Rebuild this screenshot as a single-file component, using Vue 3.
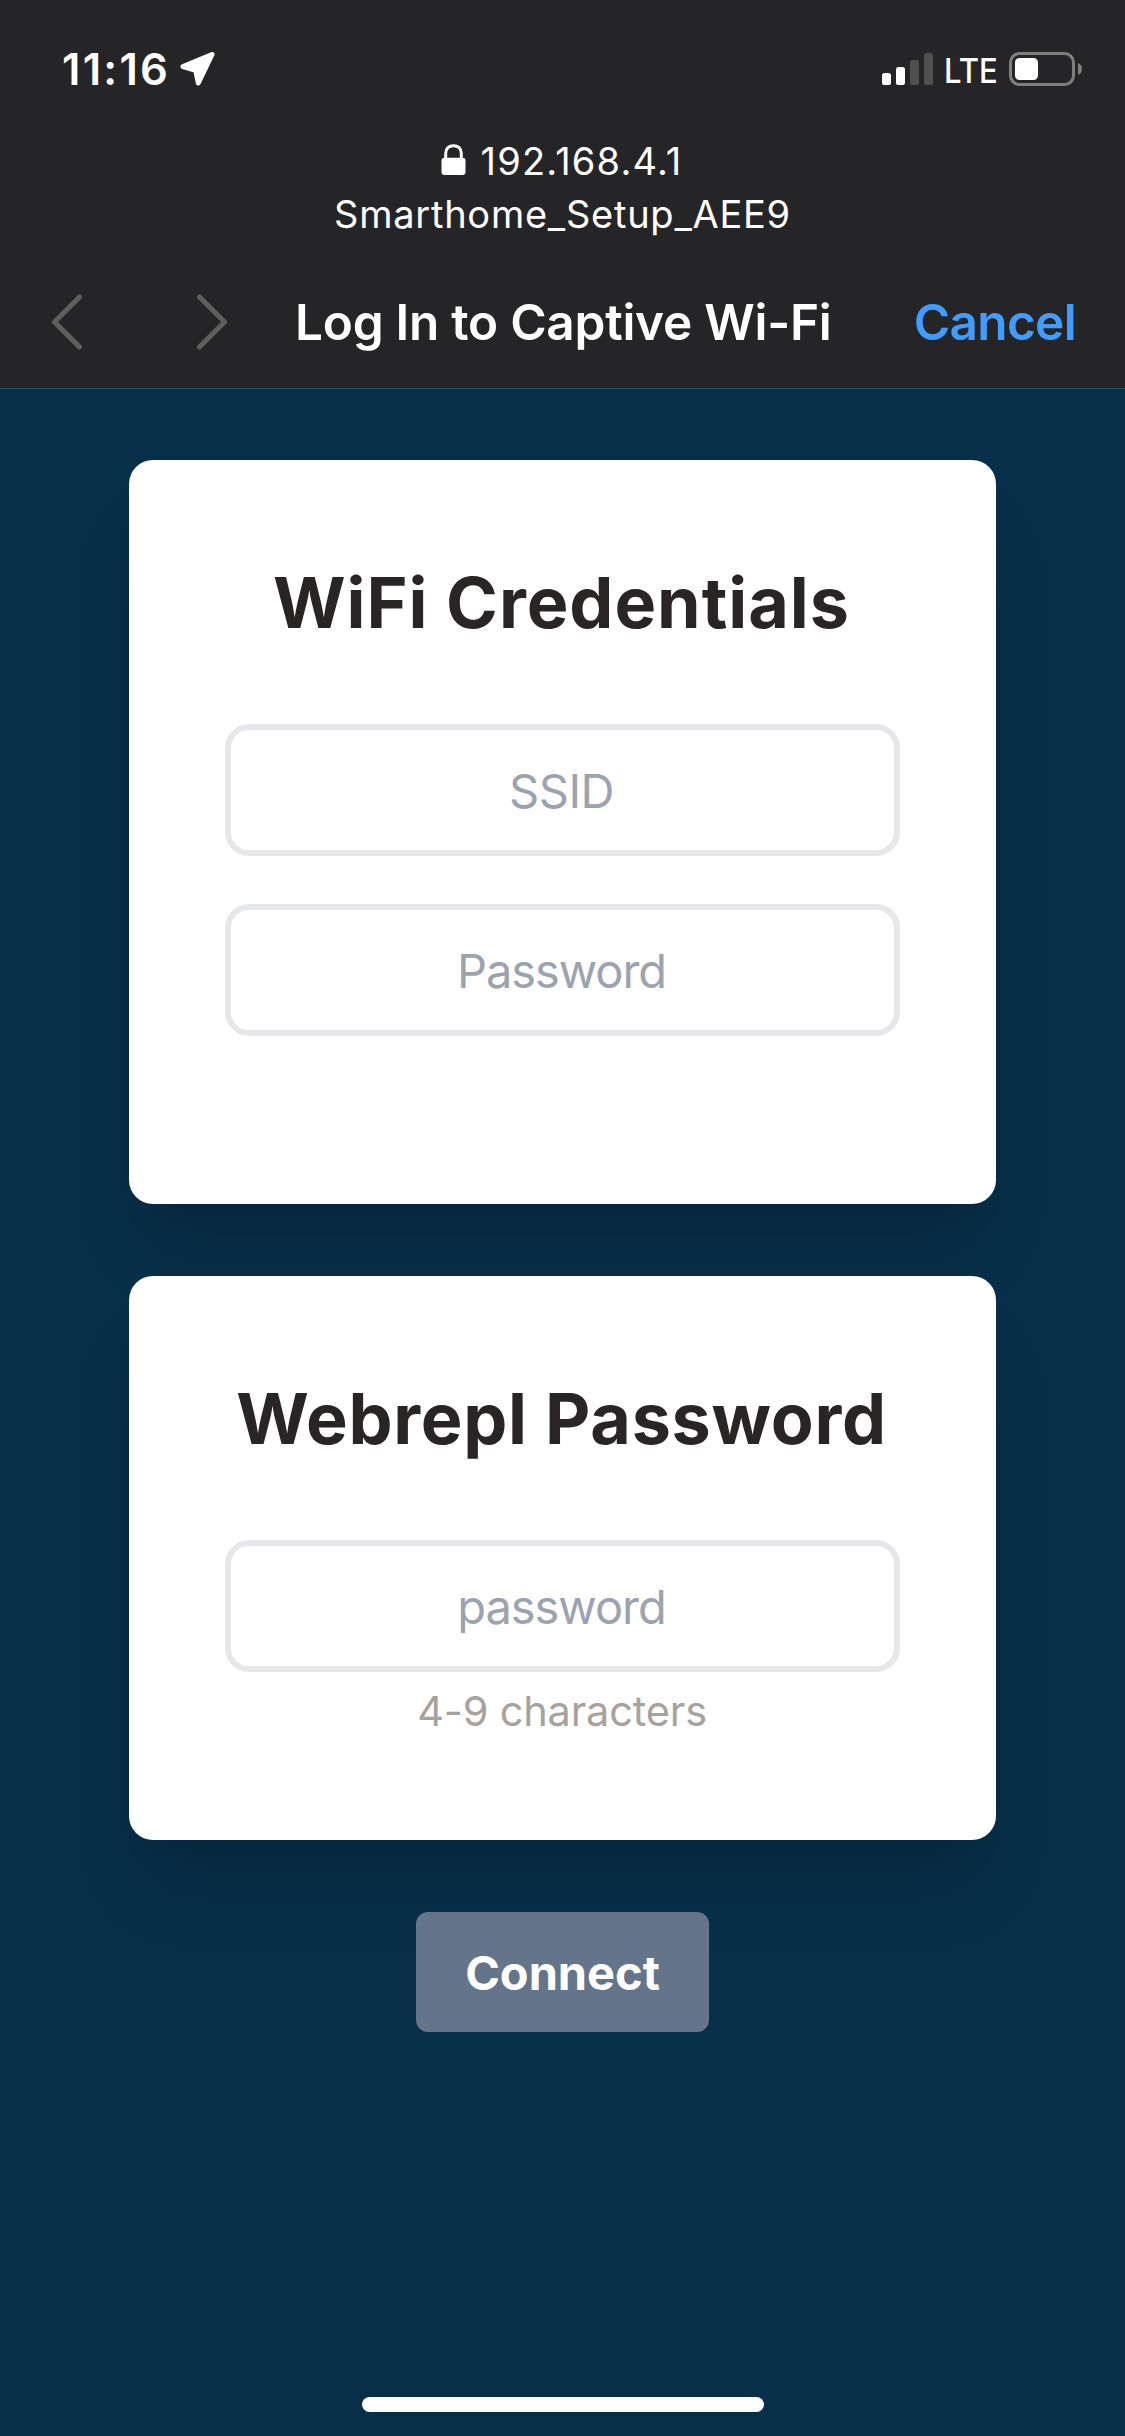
<script setup>
const bars = [
  { x: 0, h: 12, on: true },
  { x: 14, h: 18, on: true },
  { x: 28, h: 25, on: false },
  { x: 42, h: 32, on: false }
]
</script>

<template>
  <div class="screen">
    <header class="chrome">
      <div class="status">
        <div class="status-left">
          <span class="time">11:16</span>
          <svg class="location" width="36" height="36" viewBox="0 0 36 36">
            <path d="M32 3.5 L3 15.5 L15.7 19.3 L18.3 32 Z" fill="#fff" stroke="#fff" stroke-width="5" stroke-linejoin="round" />
          </svg>
        </div>
        <div class="status-right">
          <svg class="signal" width="51" height="32" viewBox="0 0 51 32">
            <rect v-for="b in bars" :key="b.x" :x="b.x" :y="32 - b.h" width="9" :height="b.h" rx="2.6" :fill="b.on ? '#fff' : '#505050'" />
          </svg>
          <span class="lte">LTE</span>
          <svg class="battery" width="74" height="34" viewBox="0 0 74 34">
            <rect x="1.5" y="1.5" width="63" height="31" rx="9" fill="none" stroke="#7f7f80" stroke-width="3" />
            <rect x="6" y="6" width="23" height="22" rx="4.5" fill="#fff" />
            <path d="M69 11 Q73 12.5 73 17 Q73 21.5 69 23 Z" fill="#7f7f80" />
          </svg>
        </div>
      </div>

      <div class="address">
        <div class="address-line host">
          <svg class="lock" width="25" height="32" viewBox="0 0 25 32">
            <path d="M4.7 15 V9.3 C4.7 4.4 8 1.8 12.5 1.8 S20.3 4.4 20.3 9.3 V15" fill="none" stroke="#fff" stroke-width="3" />
            <rect x="0.5" y="13.8" width="24" height="17.2" rx="3" fill="#fff" />
          </svg>
          <span>192.168.4.1</span>
        </div>
        <div class="address-line network">Smarthome_Setup_AEE9</div>
      </div>

      <nav class="nav">
        <svg class="chevron" width="32" height="56" viewBox="0 0 32 56">
          <path d="M28.5 3 L3.5 28 L28.5 53" />
        </svg>
        <svg class="chevron next" width="32" height="56" viewBox="0 0 32 56">
          <path d="M3.5 3 L28.5 28 L3.5 53" />
        </svg>
        <h1 class="title">Log In to Captive Wi-Fi</h1>
        <a class="cancel">Cancel</a>
      </nav>
    </header>

    <main class="page">
      <section class="card wifi">
        <h2 class="heading">WiFi Credentials</h2>
        <input class="field ssid" type="text" placeholder="SSID" />
        <input class="field" type="text" placeholder="Password" />
      </section>
      <section class="card webrepl">
        <h2 class="heading tight">Webrepl Password</h2>
        <input class="field" type="text" placeholder="password" />
        <p class="hint">4-9 characters</p>
      </section>
      <button class="connect" type="button">Connect</button>
    </main>

    <div class="home-indicator"></div>
  </div>
</template>

<style>
html,
body {
  margin: 0;
  background: #082f49;
}
</style>

<style scoped>
.screen {
  display: flex;
  flex-direction: column;
  width: 1125px;
  height: 2436px;
  overflow: hidden;
  background: #082f49;
  font-family: Inter, "Liberation Sans", sans-serif;
}
.chrome {
  box-sizing: border-box;
  height: 389px;
  flex: none;
  background: #252527;
  border-bottom: 1px solid #33506a;
  color: #fff;
}
.status {
  box-sizing: border-box;
  height: 135px;
  padding: 3px 42px 0 62px;
  display: flex;
  align-items: center;
  justify-content: space-between;
}
.status-left,
.status-right {
  display: flex;
  align-items: center;
}
.time {
  font-size: 43.5px;
  font-weight: 600;
  letter-spacing: 2.24px;
}
.location {
  margin-left: 10px;
}
.lte {
  width: 53px;
  margin-left: 11px;
  margin-top: 2px;
  font-size: 34.5px;
  font-weight: 500;
  transform: scaleX(0.9);
  transform-origin: left;
}
.battery {
  margin-left: 12px;
}
.address {
  font-size: 38px;
  line-height: 53px;
  text-align: center;
}
.address-line {
  height: 53px;
}
.host {
  display: flex;
  align-items: center;
  justify-content: center;
  letter-spacing: 1.19px;
}
.lock {
  margin: -3px 15px 0 -2px;
}
.network {
  letter-spacing: 0.75px;
}
.nav {
  display: flex;
  align-items: center;
  height: 132px;
  margin-top: 15px;
  padding: 0 49px 0 51px;
  line-height: 60px;
}
.chevron {
  flex: none;
  fill: none;
  stroke: #5f5f60;
  stroke-width: 5;
  stroke-linecap: round;
  stroke-linejoin: round;
}
.next {
  margin-left: 113px;
}
.title {
  margin: 0 0 0 67px;
  font-size: 49.5px;
  font-weight: 600;
  letter-spacing: -0.25px;
  white-space: nowrap;
}
.cancel {
  margin-left: auto;
  font-size: 49.5px;
  font-weight: 600;
  letter-spacing: -0.66px;
  color: #409cff;
}
.page {
  flex: 1;
  display: flex;
  flex-direction: column;
  align-items: center;
  gap: 72px;
  padding-top: 71px;
}
.card {
  box-sizing: border-box;
  width: 867px;
  padding: 96px;
  border-radius: 24px;
  background: #fff;
  text-align: center;
  box-shadow: 0 60px 75px -15px rgba(0, 0, 0, 0.1), 0 24px 30px -18px rgba(0, 0, 0, 0.1);
}
.wifi {
  height: 744px;
}
.webrepl {
  height: 564px;
}
.heading {
  margin: 0 0 75px;
  padding-right: 2px;
  font-size: 70px;
  font-weight: 700;
  line-height: 93px;
  letter-spacing: 0.98px;
  color: #292524;
}
.heading.tight {
  letter-spacing: 0.73px;
}
.field {
  display: block;
  box-sizing: border-box;
  width: 675px;
  height: 132px;
  padding: 0 26px 0 24px;
  border: 6px solid #e5e7eb;
  border-radius: 24px;
  background: #fff;
  font-family: inherit;
  font-size: 47px;
  letter-spacing: -1.05px;
  text-align: center;
  outline: none;
}
.field.ssid {
  letter-spacing: -0.45px;
}
.field + .field {
  margin-top: 48px;
}
.field::placeholder {
  color: #9ca3af;
  opacity: 1;
}
.hint {
  margin: 9px 0 0;
  padding-right: 1px;
  font-size: 41.5px;
  line-height: 60px;
  letter-spacing: -0.19px;
  color: #a8a29e;
}
.connect {
  width: 293px;
  height: 120px;
  padding: 0;
  border: none;
  border-radius: 12px;
  background: #64748b;
  color: #fff;
  font-family: inherit;
  font-size: 47px;
  font-weight: 700;
  letter-spacing: -0.04px;
}
.home-indicator {
  flex: none;
  width: 402px;
  height: 15px;
  margin: 0 auto 24px;
  border-radius: 8px;
  background: #fff;
}
</style>
